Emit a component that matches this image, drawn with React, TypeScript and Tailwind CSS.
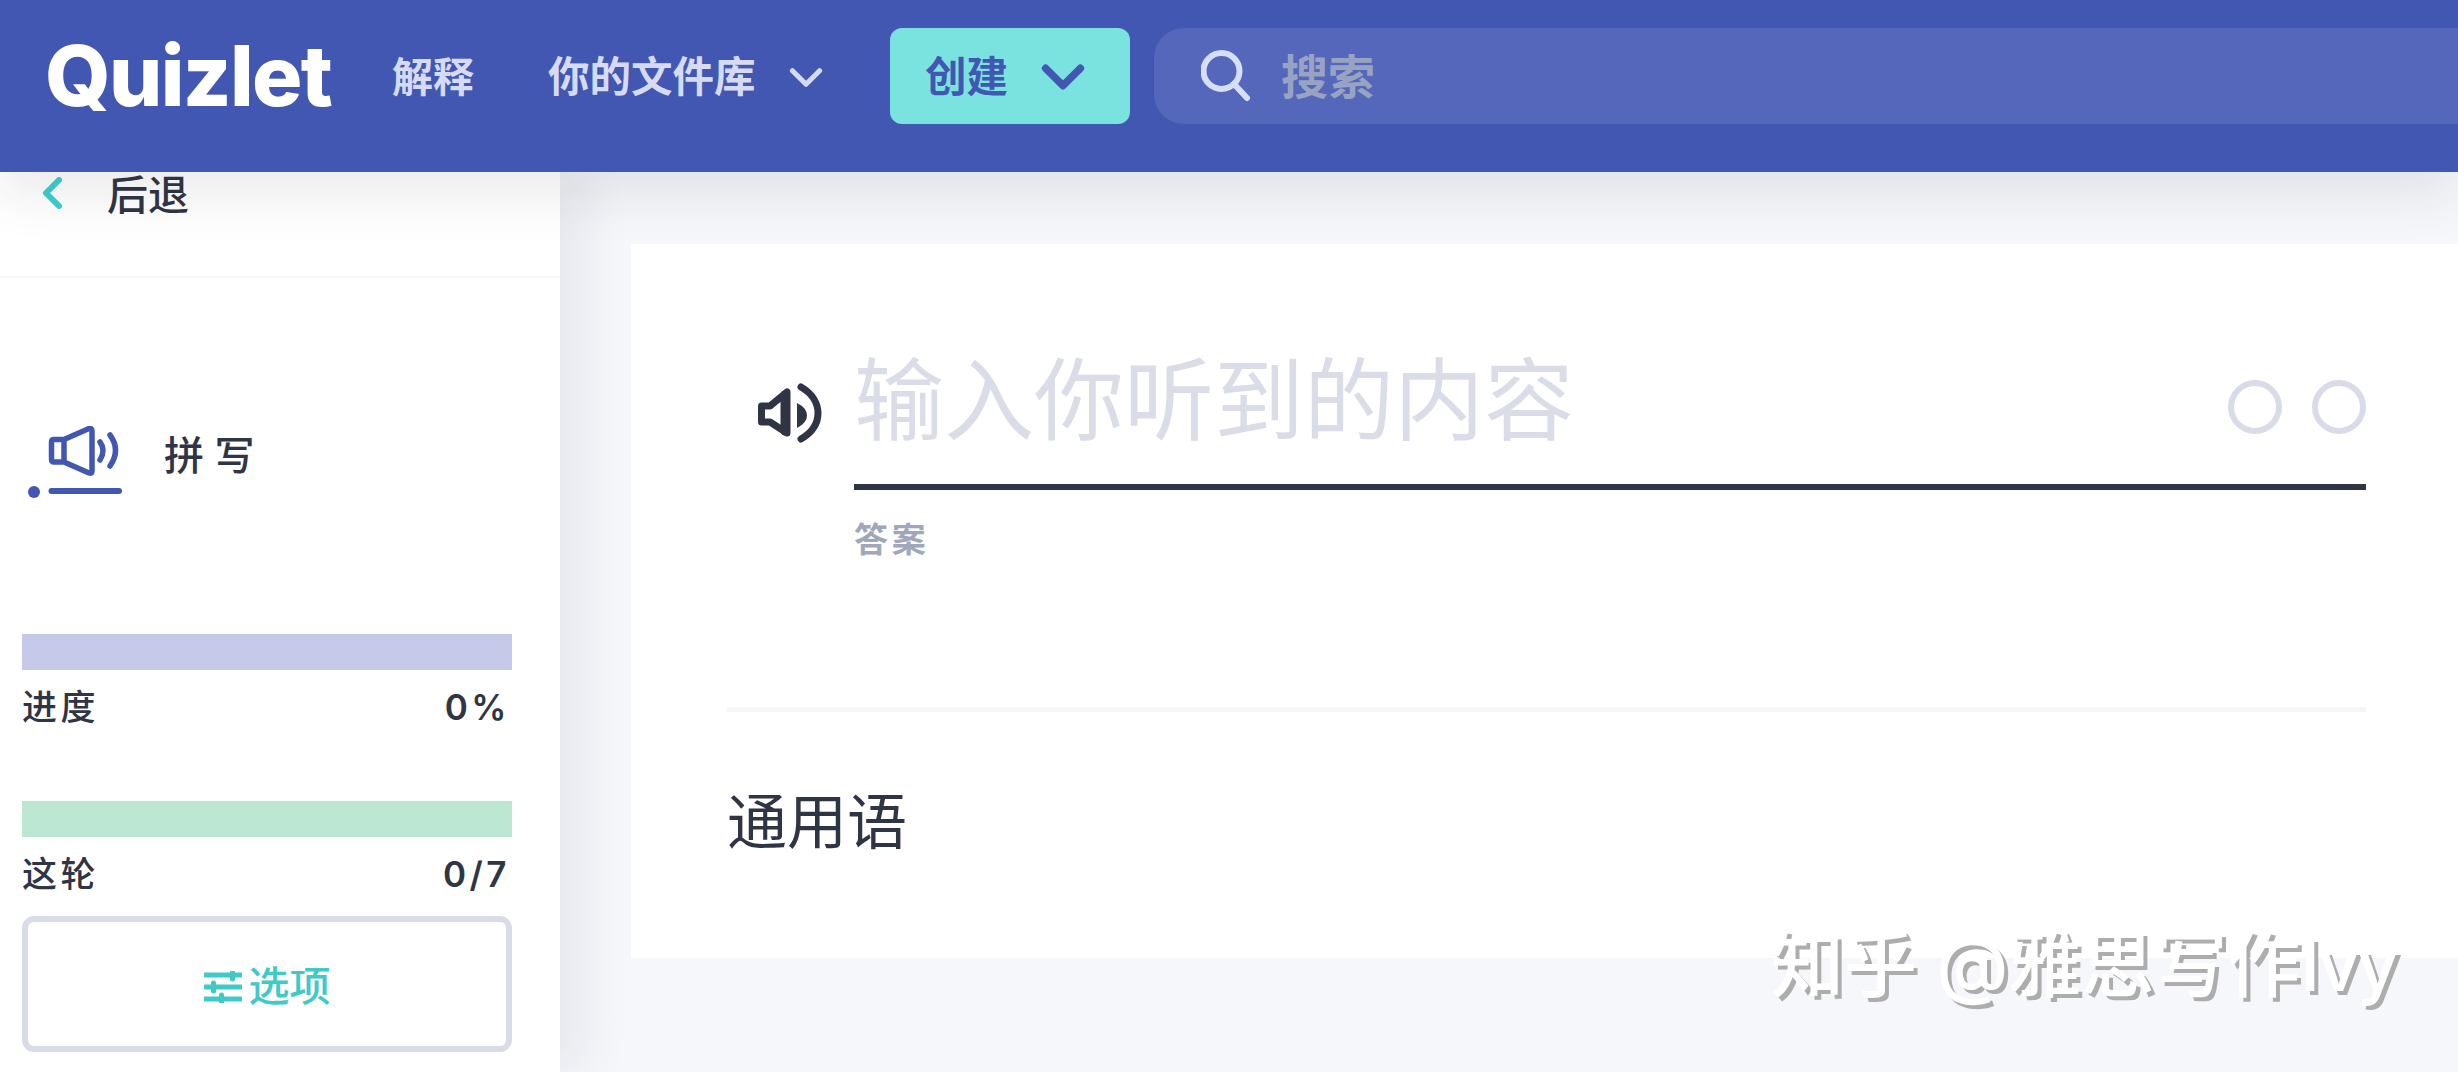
function Chevron({ className, strokeWidth }: { className: string; strokeWidth: number }) {
  return (
    <svg viewBox="0 0 40 24" className={className} fill="none" stroke="currentColor" strokeWidth={strokeWidth} strokeLinecap="round" strokeLinejoin="round">
      <path d="M4 4 L20 20 L36 4" />
    </svg>
  );
}

function Header() {
  return (
    <header className="relative z-20 flex h-[172px] shrink-0 items-start bg-[#4257b2] pt-[28px] pl-[45px] shadow-[0_24px_48px_rgba(30,30,40,0.09)]">
      <div className="w-[347px] text-[84px] leading-[96px] font-extrabold tracking-[-0.02em] text-white">Quizlet</div>
      <div className="h-[96px] w-[156px] pt-[1px] text-[41px] leading-[96px] font-bold text-[#d6dbf3]">解释</div>
      <div className="flex h-[96px] w-[342px] items-center pt-[2px] text-[41.5px] font-bold text-[#d6dbf3]">
        <span>你的文件库</span>
        <Chevron className="ml-[33px] h-[21px] w-[34px]" strokeWidth={6} />
      </div>
      <div className="flex h-[96px] w-[240px] items-center rounded-[12px] bg-[#7ae3df] pt-[2px] pl-[35px] text-[41.5px] font-bold text-[#4257b2]">
        <span>创建</span>
        <Chevron className="ml-[33px] h-[26px] w-[44px]" strokeWidth={7} />
      </div>
      <div className="ml-[24px] flex h-[96px] flex-1 items-center rounded-l-[30px] bg-[#5467ba] pl-[47px]">
        <svg viewBox="0 0 50 52" className="h-[52px] w-[50px]" fill="none" stroke="#d6defa" strokeWidth={6} strokeLinecap="round">
          <circle cx="20.5" cy="21" r="18" />
          <path d="M33 34 L46 48" />
        </svg>
        <span className="ml-[30px] pt-[2px] text-[47px] font-semibold text-[#98a3c4]">搜索</span>
      </div>
    </header>
  );
}

function Progress({ color, label, value }: { color: string; label: string; value: string }) {
  return (
    <div>
      <div className={`-mt-[1px] h-[36px] w-full ${color}`} />
      <div className="mt-[20px] flex h-[34px] items-center justify-between pr-[5px] text-[35px] leading-[34px] font-medium tracking-[0.1em] text-[#303545]">
        <span>{label}</span>
        <span className="-mr-[3px] font-semibold tracking-[0.1em]">{value}</span>
      </div>
    </div>
  );
}

function Sidebar() {
  return (
    <aside className="relative z-10 flex w-[560px] shrink-0 flex-col bg-white shadow-[24px_0_48px_rgba(30,30,40,0.07)]">
      <div className="flex h-[106px] items-start border-b-[2px] border-[#f5f6f8] pt-[3px] pl-[42px]">
        <svg viewBox="0 0 20 32" className="mt-[2px] h-[32px] w-[20px] text-[#3ccfcf]" fill="none" stroke="currentColor" strokeWidth={6} strokeLinecap="round" strokeLinejoin="round">
          <path d="M17 3 L4 16 L17 29" />
        </svg>
        <span className="ml-[45px] text-[41px] leading-[41px] font-medium text-[#303545]">后退</span>
      </div>
      <div className="mt-[148px] flex items-start pl-[28px]">
        <svg viewBox="0 0 94 72" className="h-[72px] w-[94px]" fill="none" stroke="#4257b2" strokeWidth={5.5} strokeLinecap="round" strokeLinejoin="round">
          <path d="M26 13.5 H36 L61 2.5 Q64 2 64 5 V45 Q64 48 61 47 L36 36 H26 Q23.5 36 23.5 33 V16 Q23.5 13.5 26 13.5 Z M36 13.5 V36" />
          <path d="M72 16 Q78 24 72 34" />
          <path d="M82 9 Q93 24 82 40" />
          <path d="M23.5 65 H91" strokeWidth={6} />
          <circle cx="6" cy="66" r="6" fill="#4257b2" stroke="none" />
        </svg>
        <span className="mt-[9px] ml-[42px] text-[40px] leading-[42px] font-medium tracking-[0.26em] text-[#303545]">拼写</span>
      </div>
      <div className="mt-[137px] mr-[48px] ml-[22px] flex flex-col gap-[78px]">
        <Progress color="bg-[#c6cae8]" label="进度" value="0%" />
        <Progress color="bg-[#bce8d3]" label="这轮" value="0/7" />
      </div>
      <div className="mt-[25px] mr-[48px] ml-[22px] flex h-[136px] items-center justify-center rounded-[12px] border-[6px] border-[#d9dce8] pt-[6px] text-[41px] font-medium text-[#40c9c9]">
        <svg viewBox="0 0 38 32" className="mr-[7px] h-[32px] w-[38px]" fill="none" stroke="currentColor" strokeWidth={5} strokeLinecap="round">
          <path d="M1 4 H26 M31 4 H37 M28.5 1 V8" />
          <path d="M1 16 H7 M12 16 H37 M9.5 12 V20" />
          <path d="M1 28 H15 M20 28 H37 M17.5 24 V31" />
        </svg>
        <span>选项</span>
      </div>
    </aside>
  );
}

function Card() {
  return (
    <div className="mt-[72px] ml-[71px] h-[714px] bg-white pt-[111px] pr-[92px] pl-[96px]">
      <div className="flex items-start">
        <svg viewBox="0 0 64 60" className="mt-[28px] mr-[32px] ml-[31px] h-[60px] w-[64px] shrink-0" fill="#303545" stroke="#303545" strokeWidth={7} strokeLinecap="round" strokeLinejoin="round">
          <path d="M3.5 23 H12 L29 9 V50 L12 39 H3.5 Z" fill="none" />
          <path d="M27 12 V48" strokeWidth={9} />
          <path d="M39 20 Q49 25 49 32.5 Q49 40 39 45 Z" stroke="none" />
          <path d="M43 4 C55 11 60 21 60 30 C60 40 55 49 43 56" fill="none" />
        </svg>
        <div className="flex-1">
          <div className="flex items-start justify-between">
            <span className="pt-[1px] text-[90px] leading-[90px] font-normal whitespace-nowrap text-[#dadde8]">输入你听到的内容</span>
            <div className="mt-[25px] flex gap-[30px]">
              <div className="size-[54px] rounded-full border-[6px] border-[#d9dce8]" />
              <div className="size-[54px] rounded-full border-[6px] border-[#d9dce8]" />
            </div>
          </div>
          <div className="mt-[38px] h-[6px] bg-[#303545]" />
          <div className="mt-[33px] text-[34px] leading-[34px] font-semibold tracking-[0.11em] text-[#a0a7bc]">答案</div>
        </div>
      </div>
      <div className="mt-[150px] h-[5px] bg-[#f5f6f9]" />
      <div className="mt-[80px] text-[60px] leading-[60px] text-[#303545]">通用语</div>
    </div>
  );
}

export default function App() {
  return (
    <div className="relative flex h-[1072px] w-[2458px] flex-col overflow-hidden bg-[#f6f7fb] font-['Inter','Noto_Sans_CJK_SC',sans-serif]">
      <Header />
      <div className="flex flex-1">
        <Sidebar />
        <main className="flex-1">
          <Card />
        </main>
      </div>
      <div className="absolute top-[920px] left-[1771px] z-30 text-[73px] leading-[90px] font-medium whitespace-nowrap text-white [text-shadow:4px_4px_0_#adadad]">
        知乎 @雅思写作<span className="tracking-[-0.04em]">Ivy</span>
      </div>
    </div>
  );
}
